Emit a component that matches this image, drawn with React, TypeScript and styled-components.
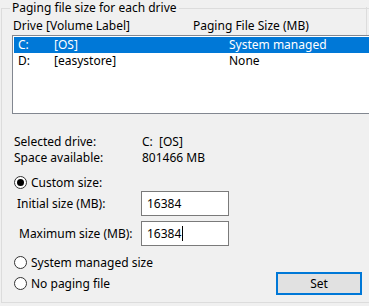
import React from "react";
import styled, { createGlobalStyle } from "styled-components";

const Global = createGlobalStyle`
  html, body { margin: 0; padding: 0; background: #f0f0f0; overflow: hidden; }
  body { font-family: "Noto Sans", "Segoe UI", sans-serif; font-size: 12px; color: #000; }
`;

const Page = styled.div`
  width: 369px;
  height: 306px;
  overflow: hidden;
  background: #f0f0f0;
  padding-left: 1px;
  box-sizing: border-box;
`;

const Group = styled.fieldset`
  margin: 0;
  padding: 0 0 0 10px;
  width: 400px;
  height: 303px;
  box-sizing: border-box;
  border: 1px solid #dcdcdc;
  display: flex;
  flex-direction: column;
`;

const Legend = styled.legend`
  margin-left: -2px;
  padding: 0 2px;
  line-height: 16px;
  height: 16px;
`;

const HeaderRow = styled.div`
  display: flex;
  align-items: center;
  height: 18px;
  width: 355px;
  margin-top: 1px;
  padding-left: 1px;
  box-sizing: border-box;
`;

const HeaderDivider = styled.span`
  margin-left: auto;
  align-self: stretch;
  width: 1px;
  background: #dcdcdc;
  margin-top: -10px;
`;

const Cell = styled.span<{ $w: number }>`
  width: ${(p) => p.$w}px;
  flex: none;
  white-space: nowrap;
  line-height: 16px;
`;

const List = styled.div`
  width: 380px;
  height: 79px;
  box-sizing: border-box;
  border: 1px solid #828790;
  background: #fff;
  padding: 1px 0 0 1px;
`;

const Row = styled.div<{ $sel?: boolean }>`
  display: flex;
  height: 16px;
  line-height: 16px;
  padding-left: 4px;
  background: ${(p) => (p.$sel ? "#0078d7" : "transparent")};
  color: ${(p) => (p.$sel ? "#fff" : "#000")};
`;

const Info = styled.div`
  margin-top: 20px;
  display: grid;
  grid-template-columns: 128px auto;
  line-height: 16px;
  padding-left: 2px;
`;

const RadioRow = styled.label<{ $mt: number }>`
  display: flex;
  align-items: center;
  gap: 4px;
  margin-top: ${(p) => p.$mt}px;
  height: 16px;
  padding-left: 2px;
  white-space: nowrap;
`;

const Circle = styled.span<{ $on?: boolean }>`
  width: 13px;
  height: 13px;
  box-sizing: border-box;
  border: 1px solid #333;
  border-radius: 50%;
  background: #fff;
  display: flex;
  align-items: center;
  justify-content: center;
  flex: none;
  &::after {
    content: "";
    width: 7px;
    height: 7px;
    border-radius: 50%;
    background: ${(p) => (p.$on ? "#000" : "transparent")};
  }
`;

const FieldRow = styled.div<{ $mt: number; $indent: number }>`
  display: flex;
  align-items: center;
  margin-top: ${(p) => p.$mt}px;
  padding-left: ${(p) => p.$indent}px;
`;

const FieldLabel = styled.span<{ $w: number }>`
  width: ${(p) => p.$w}px;
  flex: none;
`;

const TextBox = styled.div`
  width: 88px;
  height: 25px;
  box-sizing: border-box;
  border: 1px solid #7a7a7a;
  background: #fff;
  padding-left: 5px;
  display: flex;
  align-items: center;
`;

const Caret = styled.span`
  display: inline-block;
  width: 1px;
  height: 15px;
  background: #000;
  margin-left: 1px;
`;

const Bottom = styled.div`
  display: flex;
  align-items: flex-start;
  width: 350px;
`;

const Radios = styled.div`
  display: flex;
  flex-direction: column;
  flex: 1;
`;

const SetButton = styled.button`
  margin-top: 26px;
  width: 86px;
  height: 23px;
  box-sizing: border-box;
  border: 2px solid #0078d7;
  background: #e1e1e1;
  font: inherit;
  color: #000;
  padding: 0;
`;

export default function App() {
  return (
    <Page>
      <Global />
      <Group>
        <Legend>Paging file size for each drive</Legend>
        <HeaderRow>
          <Cell $w={33}>Drive</Cell>
          <Cell $w={147}>[Volume Label]</Cell>
          <Cell $w={150}>Paging File Size (MB)</Cell>
          <HeaderDivider />
        </HeaderRow>
        <List>
          <Row $sel>
            <Cell $w={36}>C:</Cell>
            <Cell $w={175}>[OS]</Cell>
            <Cell $w={150}>System managed</Cell>
          </Row>
          <Row>
            <Cell $w={36}>D:</Cell>
            <Cell $w={175}>[easystore]</Cell>
            <Cell $w={150}>None</Cell>
          </Row>
        </List>
        <Info>
          <span>Selected drive:</span>
          <span>C:&nbsp;&nbsp;[OS]</span>
          <span>Space available:</span>
          <span>801466 MB</span>
        </Info>
        <RadioRow $mt={8}>
          <Circle $on />
          Custom size:
        </RadioRow>
        <FieldRow $mt={1} $indent={5}>
          <FieldLabel $w={124}>Initial size (MB):</FieldLabel>
          <TextBox>16384</TextBox>
        </FieldRow>
        <FieldRow $mt={5} $indent={7}>
          <FieldLabel $w={122}>Maximum size (MB):</FieldLabel>
          <TextBox>
            16384
            <Caret />
          </TextBox>
        </FieldRow>
        <Bottom>
          <Radios>
            <RadioRow $mt={8}>
              <Circle />
              System managed size
            </RadioRow>
            <RadioRow $mt={5}>
              <Circle />
              No paging file
            </RadioRow>
          </Radios>
          <SetButton>Set</SetButton>
        </Bottom>
      </Group>
    </Page>
  );
}
